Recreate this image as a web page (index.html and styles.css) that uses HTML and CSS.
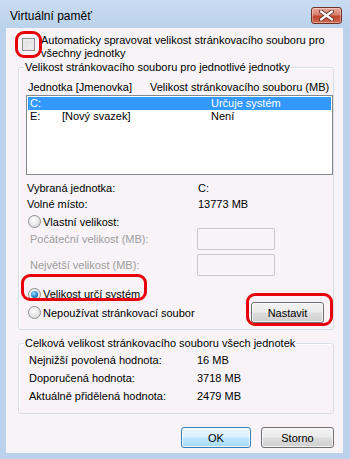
FILE: index.html
```html
<!DOCTYPE html>
<html lang="cs">
<head>
    <meta charset="UTF-8">
    <title>Virtuální paměť</title>
    <link rel="stylesheet" href="styles.css">
</head>
<body>
    <div class="window">
        <div class="titlebar">
            <span class="title">Virtuální paměť</span>
            <span class="close">
                <svg width="15" height="11" viewBox="0 0 15 11">
                    <path d="M2 1.5 L13 9.5 M13 1.5 L2 9.5" stroke="#5a2a24" stroke-width="4" stroke-linecap="round"/>
                    <path d="M2 1.5 L13 9.5 M13 1.5 L2 9.5" stroke="#ffffff" stroke-width="2.2" stroke-linecap="round"/>
                </svg>
            </span>
        </div>

        <div class="client">
            <div class="auto-row">
                <span class="checkbox"></span>
                <span class="auto-text">Automaticky spravovat velikost stránkovacího souboru pro<br>všechny jednotky</span>
            </div>

            <fieldset class="group group-drives">
                <legend>Velikost stránkovacího souboru pro jednotlivé jednotky</legend>
                <div class="list-head">
                    <span class="head-drive">Jednotka [Jmenovka]</span>
                    <span>Velikost stránkovacího souboru (MB)</span>
                </div>
                <div class="listbox">
                    <div class="list-row selected">
                        <span class="col-letter">C:</span>
                        <span class="col-name"></span>
                        <span>Určuje systém</span>
                    </div>
                    <div class="list-row">
                        <span class="col-letter">E:</span>
                        <span class="col-name">[Nový svazek]</span>
                        <span>Není</span>
                    </div>
                </div>

                <div class="info-row first">
                    <span class="info-label">Vybraná jednotka:</span>
                    <span>C:</span>
                </div>
                <div class="info-row">
                    <span class="info-label">Volné místo:</span>
                    <span>13773 MB</span>
                </div>

                <div class="radio-row custom">
                    <span class="radio"></span>
                    <span>Vlastní velikost:</span>
                </div>
                <div class="field-row">
                    <span class="field-label">Počáteční velikost (MB):</span>
                    <span class="textbox"></span>
                </div>
                <div class="field-row">
                    <span class="field-label">Největší velikost (MB):</span>
                    <span class="textbox"></span>
                </div>

                <div class="radio-row system">
                    <span class="radio checked"></span>
                    <span>Velikost určí systém</span>
                </div>
                <div class="radio-row none">
                    <span class="radio"></span>
                    <span>Nepoužívat stránkovací soubor</span>
                    <button class="btn btn-set">Nastavit</button>
                </div>
            </fieldset>

            <fieldset class="group group-total">
                <legend>Celková velikost stránkovacího souboru všech jednotek</legend>
                <div class="total-row">
                    <span class="total-label">Nejnižší povolená hodnota:</span>
                    <span>16 MB</span>
                </div>
                <div class="total-row">
                    <span class="total-label">Doporučená hodnota:</span>
                    <span>3718 MB</span>
                </div>
                <div class="total-row">
                    <span class="total-label">Aktuálně přidělená hodnota:</span>
                    <span>2479 MB</span>
                </div>
            </fieldset>

            <div class="actions">
                <button class="btn btn-default btn-ok">OK</button>
                <button class="btn btn-cancel">Storno</button>
            </div>
        </div>
    </div>

    <!-- červené zvýraznění -->
    <div class="mark mark-check"></div>
    <div class="mark mark-system"></div>
    <div class="mark mark-set"></div>
</body>
</html>
```

FILE: styles.css
```css
* {
    box-sizing: border-box;
}
body {
    margin: 0;
    width: 350px;
    height: 459px;
    background-color: #bad2ec;
    font-family: 'Segoe UI', 'Liberation Sans', Arial, sans-serif;
    font-size: 11px;
    color: #000;
    position: relative;
    overflow: hidden;
}
.window {
    display: flex;
    flex-direction: column;
    height: 100%;
}
.titlebar {
    height: 28px;
    display: flex;
    align-items: flex-start;
    justify-content: space-between;
    background: linear-gradient(180deg, #c9dcf1 0%, #bad2ec 100%);
}
.title {
    margin: 9px 0 0 10px;
    font-size: 12px;
    line-height: 14px;
}
.close {
    margin: 7px 8px 0 0;
    width: 31px;
    height: 17px;
    border: 1px solid #6e3127;
    border-radius: 3px;
    background: linear-gradient(180deg, #e9a99b 0%, #d8806d 45%, #c2442c 55%, #cf6a4f 100%);
    box-shadow: inset 0 0 0 1px rgba(255, 255, 255, 0.35);
    display: flex;
    align-items: center;
    justify-content: center;
}
.client {
    flex: 1;
    margin: 0 7px 6px 6px;
    background-color: #f7f3f6;
    padding: 0 9px 0 12px;
    display: flex;
    flex-direction: column;
}

/* zaškrtávací políčko */
.auto-row {
    display: flex;
    align-items: flex-start;
    margin-top: 6px;
    line-height: 13px;
}
.checkbox {
    width: 13px;
    height: 13px;
    margin: 4px 6px 0 4px;
    border: 1px solid #8f8f8f;
    background: linear-gradient(135deg, #dcdcdc 0%, #f4f4f4 100%);
    box-shadow: inset 0 0 0 2px #eaeaea;
    flex-shrink: 0;
}

/* skupiny */
.group {
    margin: 0;
    padding: 0;
    min-width: 0;
    border: 1px solid #d5dfe5;
    border-radius: 3px;
    box-shadow: inset 1px 1px 0 #ffffff;
}
.group legend {
    margin-left: 5px;
    padding: 0 1px;
    line-height: 14px;
}
.group-drives {
    margin-top: 0;
    padding-bottom: 6px;
}
.group-total {
    margin-top: 6px;
    padding: 1px 0 8px 0;
}

.list-head {
    display: flex;
    line-height: 14px;
    margin-top: 6px;
    padding-left: 9px;
}
.head-drive {
    width: 122px;
}
.listbox {
    margin: 1px 0 0 7px;
    height: 80px;
    border: 1px solid #828790;
    background-color: #fff;
    padding: 1px;
}
.list-row {
    display: flex;
    height: 13px;
    line-height: 13px;
    padding-left: 2px;
}
.list-row.selected {
    background-color: #3399ff;
    color: #fff;
}
.col-letter {
    width: 32px;
}
.col-name {
    width: 149px;
}

.info-row {
    display: flex;
    line-height: 16px;
    padding-left: 8px;
}
.info-row.first {
    margin-top: 5px;
}
.info-label {
    width: 171px;
}

.radio-row {
    display: flex;
    align-items: center;
    padding-left: 9px;
}
.radio-row.custom {
    margin-top: 3px;
    height: 13px;
}
.radio-row.system {
    margin-top: 10px;
    height: 16px;
}
.radio-row.none {
    margin-top: 0;
    height: 21px;
}
.radio {
    width: 13px;
    height: 13px;
    margin-right: 2px;
    border-radius: 50%;
    border: 1px solid #8e8f8f;
    background: radial-gradient(circle at 40% 35%, #ffffff 0%, #e6e6e6 55%, #cfcfcf 100%);
    flex-shrink: 0;
    display: flex;
    align-items: center;
    justify-content: center;
}
.radio.checked::after {
    content: "";
    width: 7px;
    height: 7px;
    border-radius: 50%;
    background: radial-gradient(circle at 40% 35%, #a9e2ff 0%, #2a8ad4 50%, #0c4f8f 100%);
}

.field-row {
    display: flex;
    align-items: center;
    padding-left: 11px;
    height: 22px;
    color: #9d9d9d;
}
.field-row + .field-row {
    margin-top: 4px;
}
.field-label {
    width: 167px;
}
.textbox {
    width: 78px;
    height: 22px;
    border: 1px solid #c9c9cb;
    border-radius: 2px;
    background-color: #f7f3f6;
}

/* tlačítka */
.btn {
    font-family: inherit;
    font-size: 11px;
    color: #000;
    height: 21px;
    padding: 0;
    border: 1px solid #707070;
    border-radius: 3px;
    background: linear-gradient(180deg, #f2f2f2 0%, #ebebeb 48%, #dddddd 52%, #cfcfcf 100%);
    box-shadow: inset 0 0 0 1px rgba(255, 255, 255, 0.7);
}
.btn-default {
    border-color: #3c7fb1;
    background: linear-gradient(180deg, #eaf6fd 0%, #d9f0fc 48%, #bee6fd 52%, #a7d9f5 100%);
}
.btn-set {
    width: 73px;
    margin-left: auto;
    margin-right: 9px;
}
.btn-ok {
    width: 70px;
}
.btn-cancel {
    width: 73px;
    margin-left: 10px;
}
.actions {
    display: flex;
    justify-content: flex-end;
    margin-top: 13px;
}

.total-row {
    display: flex;
    line-height: 18px;
    padding-left: 10px;
}
.total-label {
    width: 168px;
}

/* červené rámečky přes obsah */
.mark {
    position: absolute;
    border: 3px solid #e8000b;
    border-radius: 9px;
}
.mark-check {
    left: 15px;
    top: 31px;
    width: 27px;
    height: 27px;
}
.mark-system {
    left: 21px;
    top: 274px;
    width: 126px;
    height: 27px;
}
.mark-set {
    left: 246px;
    top: 293px;
    width: 87px;
    height: 33px;
}
```
